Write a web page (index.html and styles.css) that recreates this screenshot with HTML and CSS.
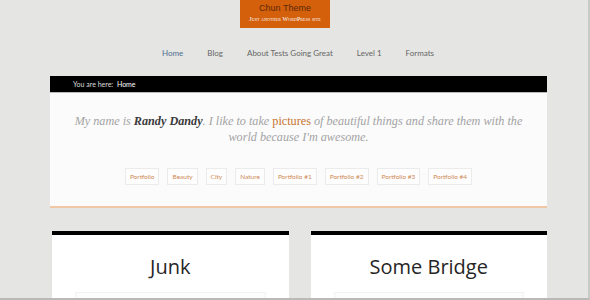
FILE: index.html
```html
<!DOCTYPE html>
<html lang="en">
<head>
    <meta charset="UTF-8">
    <meta name="viewport" content="width=device-width, initial-scale=1.0">
    <title>Chun Theme</title>
    <link rel="stylesheet" href="styles.css">
</head>
<body>
    <div class="page">
        <header class="site-header">
            <div class="brand">
                <div class="brand-title">Chun Theme</div>
                <div class="brand-tagline">Just another WordPress site</div>
            </div>
        </header>
        <nav class="main-nav">
            <a href="#" class="current">Home</a>
            <a href="#">Blog</a>
            <a href="#">About Tests Going Great</a>
            <a href="#">Level 1</a>
            <a href="#">Formats</a>
        </nav>
        <div class="wrap">
            <div class="breadcrumb">You are here: <span class="crumb">Home</span></div>
            <div class="intro">
                <p class="bio">My name is <strong>Randy Dandy</strong>. I like to take <a href="#">pictures</a> of beautiful things and share them with the<br>world because I'm awesome.</p>
                <div class="tags">
                    <a href="#">Portfolio</a>
                    <a href="#">Beauty</a>
                    <a href="#">City</a>
                    <a href="#">Nature</a>
                    <a href="#">Portfolio #1</a>
                    <a href="#">Portfolio #2</a>
                    <a href="#">Portfolio #3</a>
                    <a href="#">Portfolio #4</a>
                </div>
            </div>
            <div class="cards">
                <div class="card">
                    <h2>Junk</h2>
                    <div class="thumb"></div>
                </div>
                <div class="card">
                    <h2>Some Bridge</h2>
                    <div class="thumb"></div>
                </div>
            </div>
        </div>
    </div>
</body>
</html>
```

FILE: styles.css
```css
body {
    margin: 0;
    background-color: #e5e5e3;
    font-family: Lato, "Open Sans", sans-serif;
}
.page {
    height: 298px;
    overflow: hidden;
    border-right: 2px solid #c9c9c7;
    border-bottom: 2px solid #b9b9b7;
    width: 588px;
}
.site-header {
    padding-left: 240px;
}
.brand {
    width: 90px;
    height: 28px;
    background-color: #d4600c;
    text-align: center;
    box-sizing: border-box;
    padding-top: 3px;
}
.brand-title {
    font-family: "Liberation Sans", sans-serif;
    font-size: 9px;
    color: #5c2a06;
    line-height: 11px;
}
.brand-tagline {
    font-family: "Liberation Serif", serif;
    font-size: 6px;
    font-variant: small-caps;
    color: #fff;
    line-height: 10px;
    letter-spacing: 0.1px;
}
.main-nav {
    display: flex;
    gap: 24px;
    padding: 20px 0 0 162px;
    height: 28px;
    box-sizing: border-box;
}
.main-nav a {
    font-size: 8px;
    color: #666;
    text-decoration: none;
    line-height: 10px;
}
.main-nav a.current {
    color: #4f6f8f;
}
.wrap {
    width: 497px;
    margin: 20px 0 0 50px;
}
.breadcrumb {
    background-color: #000;
    color: #ddd;
    font-size: 7px;
    height: 17px;
    line-height: 17px;
    padding-left: 23px;
    border-bottom: 1px solid #bbb;
    box-sizing: border-box;
}
.crumb {
    color: #fff;
    margin-left: 2px;
}
.intro {
    background-color: #fbfbfc;
    border-bottom: 2px solid #f1c8a6;
    height: 115px;
    box-sizing: border-box;
    padding-top: 20px;
    text-align: center;
}
.bio {
    margin: 0;
    font-family: "Liberation Serif", Georgia, serif;
    font-style: italic;
    font-size: 12.2px;
    line-height: 16px;
    color: #a3a3a3;
    white-space: nowrap;
}
.bio strong {
    color: #3a3a3a;
}
.bio a {
    color: #c8742e;
    font-style: normal;
    text-decoration: none;
}
.tags {
    display: flex;
    justify-content: center;
    gap: 8px;
    margin-top: 23px;
}
.tags a {
    font-size: 6.5px;
    color: #cf8a55;
    text-decoration: none;
    border: 1px solid #ebebeb;
    background-color: #fdfdfd;
    height: 17px;
    line-height: 15px;
    padding: 0 4px;
    box-sizing: border-box;
}
.cards {
    display: flex;
    gap: 22px;
    margin-top: 23px;
    padding-left: 2px;
}
.card {
    flex: 1;
    background-color: #fff;
    border-top: 4px solid #000;
    height: 80px;
    text-align: center;
}
.card h2 {
    margin: 19px 0 0;
    font-family: "Open Sans", Lato, sans-serif;
    font-weight: 400;
    font-size: 20px;
    color: #262626;
    line-height: 26px;
}
.thumb {
    margin: 12px 23px 0;
    height: 20px;
    border: 1px solid #f2f2f2;
    background-color: #fcfcfc;
}
```
